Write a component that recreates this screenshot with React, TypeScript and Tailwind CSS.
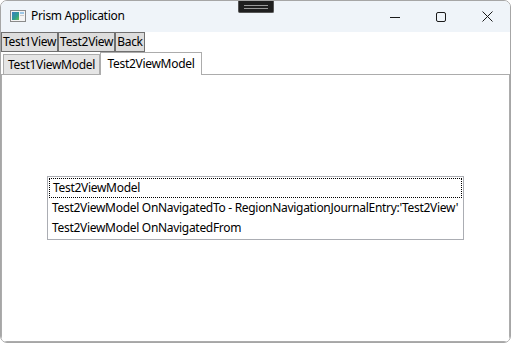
import React from "react";

const font = { fontFamily: '"Noto Sans", "Liberation Sans", sans-serif' };

const AppIcon: React.FC = () => (
  <svg width="16" height="12" viewBox="0 0 16 12">
    <rect x="0.5" y="0.5" width="15" height="11" fill="#f4f4f4" stroke="#8a8a8a" />
    <defs>
      <linearGradient id="g" x1="0" y1="0" x2="1" y2="1">
        <stop offset="0" stopColor="#3b7fc4" />
        <stop offset="0.6" stopColor="#2f9e8f" />
        <stop offset="1" stopColor="#6cc04a" />
      </linearGradient>
    </defs>
    <rect x="2" y="2" width="7" height="8" fill="url(#g)" />
    <rect x="10" y="2" width="4" height="2" fill="#9cc7e8" />
    <rect x="10" y="5" width="4" height="1" fill="#c9c9c9" />
  </svg>
);

const TitleBar: React.FC = () => (
  <div className="relative flex h-[31px] shrink-0 items-center bg-[#eff4f9]">
    <div className="ml-[9px] mt-[-1px]">
      <AppIcon />
    </div>
    <span className="ml-[5px] mt-[-1px] text-[12px] text-black">Prism Application</span>

    {/* drag handle overlay */}
    <div className="absolute left-[237px] top-0 flex h-[12px] w-[36px] flex-col items-center justify-center gap-[2px] rounded-b-[2px] bg-[#1f1f1f] border border-t-0 border-[#555]">
      <div className="h-[1px] w-[24px] bg-[#9a9a9a]" />
      <div className="h-[1px] w-[24px] bg-[#9a9a9a]" />
    </div>

    <div className="ml-auto flex h-full">
      <div className="flex w-[46px] items-center justify-center">
        <svg width="10" height="10" viewBox="0 0 10 10">
          <line x1="0" y1="5.5" x2="10" y2="5.5" stroke="#1a1a1a" strokeWidth="1" />
        </svg>
      </div>
      <div className="flex w-[46px] items-center justify-center">
        <svg width="10" height="10" viewBox="0 0 10 10">
          <rect x="0.5" y="0.5" width="9" height="9" rx="1.5" fill="none" stroke="#1a1a1a" strokeWidth="1" />
        </svg>
      </div>
      <div className="flex w-[46px] items-center justify-center">
        <svg width="11" height="11" viewBox="0 0 11 11">
          <path d="M0.5 0.5 L10.5 10.5 M10.5 0.5 L0.5 10.5" stroke="#1a1a1a" strokeWidth="1" />
        </svg>
      </div>
    </div>
  </div>
);

const NavButton: React.FC<{ label: string }> = ({ label }) => (
  <button className="h-[20px] border border-[#707070] bg-[#dddddd] px-[1px] text-[12px] leading-[18px] text-black">
    {label}
  </button>
);

const items = [
  "Test2ViewModel",
  "Test2ViewModel OnNavigatedTo - RegionNavigationJournalEntry:'Test2View'",
  "Test2ViewModel OnNavigatedFrom",
];

export default function App() {
  return (
    <div
      className="flex h-[343px] w-[511px] flex-col overflow-hidden rounded-[7px] border border-[#a6a6a6] bg-white tracking-[-0.3px]"
      style={font}
    >
      <TitleBar />

      {/* navigation buttons */}
      <div className="flex h-[20px] shrink-0">
        <NavButton label="Test1View" />
        <NavButton label="Test2View" />
        <NavButton label="Back" />
      </div>

      {/* tabs */}
      <div className="flex h-[22px] shrink-0 items-end pl-[2px]">
        <div className="relative z-0 mb-[-1px] flex h-[21px] w-[97px] items-center justify-center border border-[#acacac] bg-[#e5e5e5] text-[12px] text-black">
          Test1ViewModel
        </div>
        <div className="relative z-10 mb-[-1px] flex h-[23px] w-[102px] items-center justify-center border border-b-0 border-[#acacac] bg-white pb-[1px] text-[12px] text-black">
          Test2ViewModel
        </div>
      </div>

      {/* tab content */}
      <div className="flex flex-1 items-center justify-center border border-[#acacac] bg-white">
        <div className="w-[417px] border border-[#abadb3] bg-white p-[1px]">
          {items.map((text, i) => (
            <div
              key={i}
              className={`flex h-[20px] items-center whitespace-nowrap pl-[3px] text-[12px] text-black ${
                i === 0 ? "border border-dotted border-black pl-[2px]" : ""
              }`}
            >
              {text}
            </div>
          ))}
        </div>
      </div>
    </div>
  );
}
